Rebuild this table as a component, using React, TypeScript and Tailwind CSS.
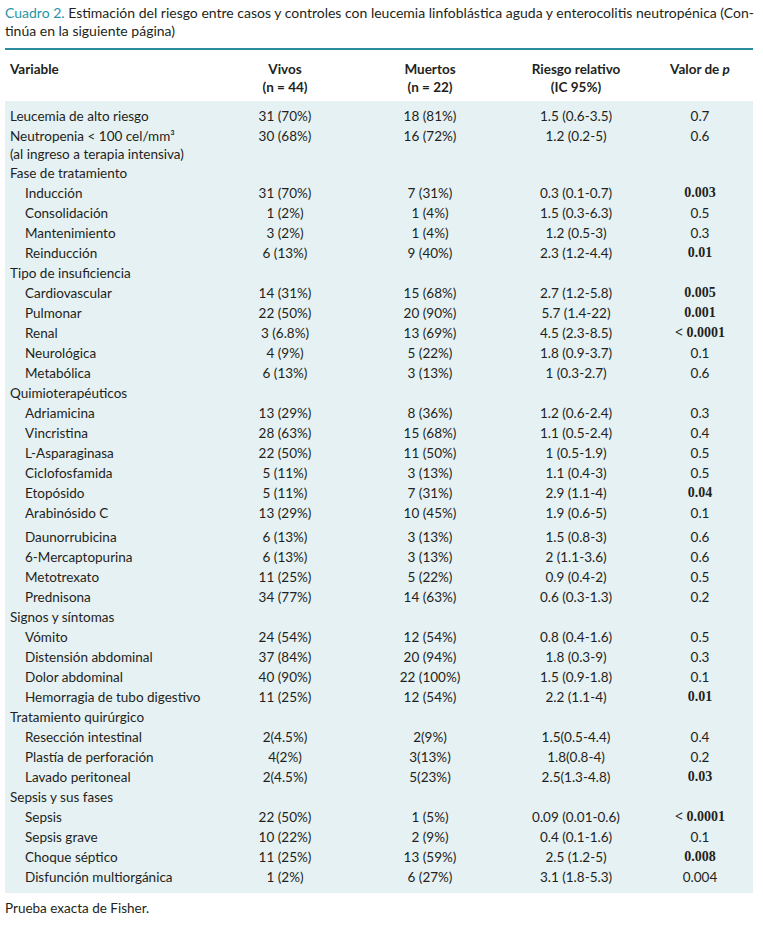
type Row = {
  label: string
  indent?: boolean
  vivos?: string
  muertos?: string
  rr?: string
  p?: string
  bold?: boolean
  extra?: string
  gapBefore?: boolean
}

const rows: Row[] = [
  { label: 'Leucemia de alto riesgo', vivos: '31 (70%)', muertos: '18 (81%)', rr: '1.5 (0.6-3.5)', p: '0.7' },
  { label: 'Neutropenia < 100 cel/mm³', extra: '(al ingreso a terapia intensiva)', vivos: '30 (68%)', muertos: '16 (72%)', rr: '1.2 (0.2-5)', p: '0.6' },
  { label: 'Fase de tratamiento' },
  { label: 'Inducción', indent: true, vivos: '31 (70%)', muertos: '7 (31%)', rr: '0.3 (0.1-0.7)', p: '0.003', bold: true },
  { label: 'Consolidación', indent: true, vivos: '1 (2%)', muertos: '1 (4%)', rr: '1.5 (0.3-6.3)', p: '0.5' },
  { label: 'Mantenimiento', indent: true, vivos: '3 (2%)', muertos: '1 (4%)', rr: '1.2 (0.5-3)', p: '0.3' },
  { label: 'Reinducción', indent: true, vivos: '6 (13%)', muertos: '9 (40%)', rr: '2.3 (1.2-4.4)', p: '0.01', bold: true },
  { label: 'Tipo de insuficiencia' },
  { label: 'Cardiovascular', indent: true, vivos: '14 (31%)', muertos: '15 (68%)', rr: '2.7 (1.2-5.8)', p: '0.005', bold: true },
  { label: 'Pulmonar', indent: true, vivos: '22 (50%)', muertos: '20 (90%)', rr: '5.7 (1.4-22)', p: '0.001', bold: true },
  { label: 'Renal', indent: true, vivos: '3 (6.8%)', muertos: '13 (69%)', rr: '4.5 (2.3-8.5)', p: '< 0.0001', bold: true },
  { label: 'Neurológica', indent: true, vivos: '4 (9%)', muertos: '5 (22%)', rr: '1.8 (0.9-3.7)', p: '0.1' },
  { label: 'Metabólica', indent: true, vivos: '6 (13%)', muertos: '3 (13%)', rr: '1 (0.3-2.7)', p: '0.6' },
  { label: 'Quimioterapéuticos' },
  { label: 'Adriamicina', indent: true, vivos: '13 (29%)', muertos: '8 (36%)', rr: '1.2 (0.6-2.4)', p: '0.3' },
  { label: 'Vincristina', indent: true, vivos: '28 (63%)', muertos: '15 (68%)', rr: '1.1 (0.5-2.4)', p: '0.4' },
  { label: 'L-Asparaginasa', indent: true, vivos: '22 (50%)', muertos: '11 (50%)', rr: '1 (0.5-1.9)', p: '0.5' },
  { label: 'Ciclofosfamida', indent: true, vivos: '5 (11%)', muertos: '3 (13%)', rr: '1.1 (0.4-3)', p: '0.5' },
  { label: 'Etopósido', indent: true, vivos: '5 (11%)', muertos: '7 (31%)', rr: '2.9 (1.1-4)', p: '0.04', bold: true },
  { label: 'Arabinósido C', indent: true, vivos: '13 (29%)', muertos: '10 (45%)', rr: '1.9 (0.6-5)', p: '0.1' },
  { label: 'Daunorrubicina', indent: true, gapBefore: true, vivos: '6 (13%)', muertos: '3 (13%)', rr: '1.5 (0.8-3)', p: '0.6' },
  { label: '6-Mercaptopurina', indent: true, vivos: '6 (13%)', muertos: '3 (13%)', rr: '2 (1.1-3.6)', p: '0.6' },
  { label: 'Metotrexato', indent: true, vivos: '11 (25%)', muertos: '5 (22%)', rr: '0.9 (0.4-2)', p: '0.5' },
  { label: 'Prednisona', indent: true, vivos: '34 (77%)', muertos: '14 (63%)', rr: '0.6 (0.3-1.3)', p: '0.2' },
  { label: 'Signos y síntomas' },
  { label: 'Vómito', indent: true, vivos: '24 (54%)', muertos: '12 (54%)', rr: '0.8 (0.4-1.6)', p: '0.5' },
  { label: 'Distensión abdominal', indent: true, vivos: '37 (84%)', muertos: '20 (94%)', rr: '1.8 (0.3-9)', p: '0.3' },
  { label: 'Dolor abdominal', indent: true, vivos: '40 (90%)', muertos: '22 (100%)', rr: '1.5 (0.9-1.8)', p: '0.1' },
  { label: 'Hemorragia de tubo digestivo', indent: true, vivos: '11 (25%)', muertos: '12 (54%)', rr: '2.2 (1.1-4)', p: '0.01', bold: true },
  { label: 'Tratamiento quirúrgico' },
  { label: 'Resección intestinal', indent: true, vivos: '2(4.5%)', muertos: '2(9%)', rr: '1.5(0.5-4.4)', p: '0.4' },
  { label: 'Plastía de perforación', indent: true, vivos: '4(2%)', muertos: '3(13%)', rr: '1.8(0.8-4)', p: '0.2' },
  { label: 'Lavado peritoneal', indent: true, vivos: '2(4.5%)', muertos: '5(23%)', rr: '2.5(1.3-4.8)', p: '0.03', bold: true },
  { label: 'Sepsis y sus fases' },
  { label: 'Sepsis', indent: true, vivos: '22 (50%)', muertos: '1 (5%)', rr: '0.09 (0.01-0.6)', p: '< 0.0001', bold: true },
  { label: 'Sepsis grave', indent: true, vivos: '10 (22%)', muertos: '2 (9%)', rr: '0.4 (0.1-1.6)', p: '0.1' },
  { label: 'Choque séptico', indent: true, vivos: '11 (25%)', muertos: '13 (59%)', rr: '2.5 (1.2-5)', p: '0.008', bold: true },
  { label: 'Disfunción multiorgánica', indent: true, vivos: '1 (2%)', muertos: '6 (27%)', rr: '3.1 (1.8-5.3)', p: '0.004' },
]

const cols = 'grid grid-cols-[210px_140px_150px_142px_106px]'

export default function App() {
  return (
    <div className="w-[763px] h-[928px] bg-white text-[#231f20] font-['Lato','Open_Sans',sans-serif]">
      <p className="px-[5px] pt-[4px] text-[14px] leading-[18px]">
        <span className="whitespace-nowrap">
          <span className="text-[#1f95a8]">Cuadro 2.</span> Estimación del riesgo entre casos y controles con leucemia linfoblástica aguda y enterocolitis neutropénica (Con-
        </span>
        <br />
        tinúa en la siguiente página)
      </p>

      <div className="mx-[5px] mt-[8px] w-[748px] border-t-2 border-[#2b8d9b]">
        <div className={`${cols} pt-[10px] pb-[5px] text-[13.5px] leading-[18px] font-bold`}>
          <div className="pl-[5px]">Variable</div>
          <div className="text-center">Vivos<br />(n = 44)</div>
          <div className="text-center">Muertos<br />(n = 22)</div>
          <div className="text-center">Riesgo relativo<br />(IC 95%)</div>
          <div className="text-center">
            Valor de <span className="italic">p</span>
          </div>
        </div>

        <div className="bg-[#e6f1f4] pt-[5px] pb-[6px] text-[13.5px]">
          {rows.map((r) => (
            <div key={r.label} className={`${cols} ${r.gapBefore ? 'mt-[4px]' : ''}`}>
              <div className={`${r.indent ? 'pl-[20px]' : 'pl-[5px]'} leading-[20px] whitespace-nowrap`}>
                {r.label}
                {r.extra && <div className="leading-[17px]">{r.extra}</div>}
              </div>
              <div className="text-center leading-[20px]">{r.vivos}</div>
              <div className="text-center leading-[20px]">{r.muertos}</div>
              <div className="text-center leading-[20px]">{r.rr}</div>
              <div
                className={`text-center leading-[20px] ${r.bold ? "font-bold font-['Liberation_Serif',serif] text-[14px]" : ''}`}
              >
                {r.p}
              </div>
            </div>
          ))}
        </div>
      </div>

      <p className="px-[5px] pt-[6px] text-[13.5px] leading-[18px]">Prueba exacta de Fisher.</p>
    </div>
  )
}
